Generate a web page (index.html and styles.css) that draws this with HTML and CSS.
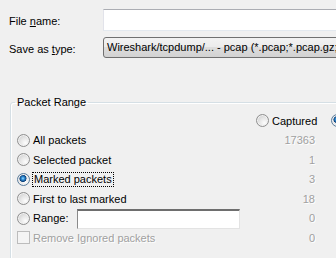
FILE: index.html
```html
<!doctype html>
<html lang="en">
<head>
	<meta charset="UTF-8">
	<title>Export Specified Packets</title>
	<link rel="stylesheet" href="styles.css">
</head>
<body>
	<div class="dialog">
		<div class="form-row">
			<label class="field-label">File <u>n</u>ame:</label>
			<div class="textbox wide"></div>
		</div>
		<div class="form-row">
			<label class="field-label">Save as <u>t</u>ype:</label>
			<div class="combo">Wireshark/tcpdump/... - pcap (*.pcap;*.pcap.gz;*.cap;*.cap.gz;*.dmp.gz)</div>
		</div>

		<fieldset class="range-group">
			<legend>Packet Range</legend>
			<div class="range-grid">
				<span></span>
				<label class="opt"><span class="radio"></span>Captured</label>
				<label class="opt col3"><span class="radio on"></span>Displayed</label>

				<label class="opt"><span class="radio"></span>All packets</label>
				<span class="num">17363</span>
				<span class="num col3">1524</span>

				<label class="opt"><span class="radio"></span>Selected packet</label>
				<span class="num">1</span>
				<span class="num col3">1</span>

				<label class="opt"><span class="radio on"></span><span class="focus">Marked packets</span></label>
				<span class="num">3</span>
				<span class="num col3">3</span>

				<label class="opt"><span class="radio"></span>First to last marked</label>
				<span class="num">18</span>
				<span class="num col3">12</span>

				<div class="opt">
					<span class="radio"></span><span class="range-label">Range:</span>
					<div class="textbox range-box"></div>
				</div>
				<span class="num">0</span>
				<span class="num col3">0</span>

				<label class="opt disabled"><span class="check"></span>Remove Ignored packets</label>
				<span class="num">0</span>
				<span class="num col3">0</span>
			</div>
		</fieldset>
	</div>
</body>
</html>
```

FILE: styles.css
```css
*{
	box-sizing: border-box;
}
html, body{
	margin: 0;
	padding: 0;
	overflow: hidden;
}
body{
	width: 336px;
	height: 258px;
	background: #f0f0f0;
	color: #000;
	font: 11px "Liberation Sans", Arial, sans-serif;
}
.dialog{
	width: 520px;
	padding-top: 9px;
}
.form-row{
	display: flex;
	align-items: center;
}
.form-row + .form-row{
	margin-top: 6px;
}
.field-label{
	width: 103px;
	padding-left: 9px;
	padding-top: 2px;
}
.textbox{
	background: #fff;
	border: 1px solid;
	border-color: #abadb3 #dbdfe6 #e3e9ef #e2e3ea;
}
.wide{
	width: 400px;
	height: 22px;
}
.combo{
	width: 400px;
	height: 21px;
	line-height: 19px;
	padding-left: 3px;
	border: 1px solid #707070;
	border-radius: 3px;
	background: linear-gradient(#f2f2f2, #ebebeb 50%, #dddddd 50%, #d2d2d2);
	white-space: nowrap;
	overflow: hidden;
}

/* group box */
.range-group{
	margin: 38px 0 0 10px;
	padding: 2px 0 40px 0;
	width: 480px;
	min-width: 0;
	border: 1px solid #d5dfe5;
	border-radius: 3px;
	box-shadow: inset 1px 1px 0 #fff;
}
.range-group legend{
	margin-left: 4px;
	padding: 0 2px;
	line-height: 13px;
}
.range-grid{
	display: grid;
	grid-template-columns: 239px 59px 76px;
	grid-auto-rows: 19.5px;
	align-items: center;
	margin-left: 6px;
}
.opt{
	display: flex;
	align-items: center;
	gap: 3px;
	white-space: nowrap;
}
.col3{
	padding-left: 16px;
}
.num{
	text-align: right;
	color: #a0a0a0;
	text-shadow: 1px 1px 0 #fff;
}
.disabled{
	color: #a0a0a0;
	text-shadow: 1px 1px 0 #fff;
}

.radio{
	flex: none;
	width: 13px;
	height: 13px;
	border-radius: 50%;
	border: 1px solid #8f8f8f;
	background: radial-gradient(circle at 68% 72%, #fdfdfd 0, #e6e6e6 45%, #c4c4c4 100%);
	box-shadow: inset 0 0 0 1px #f2f2f2;
}
.radio.on{
	border-color: #5b7d9c;
	background:
		radial-gradient(circle at 45% 40%, #9fdcff 0, #2f8fd8 1.5px, #0e3f78 3.3px, rgba(14,63,120,0) 3.8px),
		radial-gradient(circle at 68% 72%, #fdfdfd 0, #e6e6e6 45%, #c4c4c4 100%);
}
.check{
	flex: none;
	width: 13px;
	height: 13px;
	border: 1px solid #bcbcbc;
	background: #f4f4f4;
}
.focus{
	outline: 1px dotted #000;
	outline-offset: 0;
	padding: 0 1px;
	line-height: 13px;
}
.range-label{
	width: 41px;
}
.range-box{
	width: 163px;
	height: 20px;
	margin-top: 1px;
	border-color: #6e6e6e #e3e3e3 #e3e3e3 #8a8a8a;
	border-top-width: 2px;
}
```
